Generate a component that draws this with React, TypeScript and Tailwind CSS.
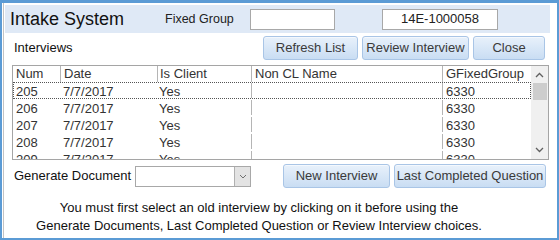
import React from "react";

const font = { fontFamily: '"Liberation Sans", Arial, sans-serif' };

function Btn({ w, children }: { w: string; children: React.ReactNode }) {
  return (
    <div
      className={`${w} h-[24px] flex items-center justify-center rounded-[3px] border border-[#a9c5e6] bg-gradient-to-b from-[#e8f1fb] to-[#c9ddf3] text-[13px] text-[#3a3a3a] shadow-[inset_0_1px_0_#f4f8fd]`}
    >
      {children}
    </div>
  );
}

const rows = ["205", "206", "207", "208", "209"];

export default function App() {
  return (
    <div style={font} className="w-[559px] h-[240px] bg-white">
      <div className="w-[559px] h-[240px] border-t-[3px] border-l-[2px] border-r-[2px] border-b-[2px] border-[#5b9bd5] flex flex-col">
        <div className="ml-[1px] border-l border-[#c3c3c3] flex-1 flex flex-col">
          {/* header */}
          <div className="mt-[2px] ml-[1px] mr-[7px] h-[28px] bg-[#dfe9f6] flex items-center">
            <div className="pl-[5px] w-[160px] text-[18px] text-[#111] leading-none">Intake System</div>
            <div className="w-[85px] text-[12.5px] text-[#222]">Fixed Group</div>
            <div className="w-[85px] h-[21px] bg-white border border-[#a8a8a8]" />
            <div className="ml-[47px] w-[116px] h-[21px] bg-white border border-[#a8a8a8] flex items-center justify-center text-[13px] text-[#222]">
              14E-1000058
            </div>
          </div>
          {/* interviews row */}
          <div className="mt-[3px] h-[24px] flex items-center">
            <div className="ml-[10px] w-[249px] text-[13px] text-[#111]">Interviews</div>
            <div className="flex gap-[4px]">
              <Btn w="w-[95px]">Refresh List</Btn>
              <Btn w="w-[107px]">Review Interview</Btn>
              <Btn w="w-[72px]">Close</Btn>
            </div>
          </div>
          {/* table */}
          <div className="mt-[5px] ml-[8px] w-[537px] h-[95px] border border-[#a5a5a5] flex overflow-hidden text-[13px] text-[#333]">
            <div className="flex-1 relative flex flex-col">
              <div className="h-[16px] flex leading-[16px] text-[#333]">
                <div className="w-[47px] pl-[3px]">Num</div>
                <div className="w-[97px] pl-[3px] border-l border-[#b5b5b5]">Date</div>
                <div className="w-[94px] pl-[2px] border-l border-[#b5b5b5]">Is Client</div>
                <div className="w-[191px] pl-[3px] border-l border-[#b5b5b5]">Non CL Name</div>
                <div className="w-[89px] pl-[3px] border-l border-[#b5b5b5]">GFixedGroup</div>
              </div>
              {rows.map((n, i) => (
                <div
                  key={n}
                  className={`h-[17px] flex leading-[17px] ${
                    i === 0 ? "border border-dotted border-[#555]" : "border border-transparent"
                  }`}
                >
                  <div className="w-[46px] pl-[2px]">{n}</div>
                  <div className="w-[97px] pl-[3px]">7/7/2017</div>
                  <div className="w-[94px] pl-[2px]">Yes</div>
                  <div className="w-[191px] border-l border-[#b5b5b5]" />
                  <div className="w-[88px] pl-[3px] border-l border-[#b5b5b5]">6330</div>
                </div>
              ))}
            </div>
            <div className="w-[17px] bg-[#f0f0f0] flex flex-col items-center">
              <svg width="9" height="6" viewBox="0 0 9 6" className="mt-[6px]">
                <path d="M1 5 L4.5 1.5 L8 5" fill="none" stroke="#606060" strokeWidth="1.3" />
              </svg>
              <div className="mt-[5px] w-[14px] h-[17px] bg-[#cdcdcd]" />
              <div className="flex-1" />
              <svg width="9" height="6" viewBox="0 0 9 6" className="mb-[6px]">
                <path d="M1 1 L4.5 4.5 L8 1" fill="none" stroke="#606060" strokeWidth="1.3" />
              </svg>
            </div>
          </div>
          {/* generate row */}
          <div className="mt-[4px] h-[24px] flex items-center">
            <div className="ml-[10px] w-[121px] text-[13px] text-[#111]">Generate Document</div>
            <div className="w-[116px] h-[21px] bg-white border border-[#a8a8a8] flex justify-end">
              <div className="w-[16px] h-full bg-[#e3e3e3] border-l border-[#b0b0b0] flex items-center justify-center">
                <svg width="8" height="5" viewBox="0 0 8 5">
                  <path d="M1 1 L4 4 L7 1" fill="none" stroke="#707070" strokeWidth="1" />
                </svg>
              </div>
            </div>
            <div className="ml-[32px] flex gap-[4px]">
              <Btn w="w-[107px]">New Interview</Btn>
              <Btn w="w-[152px]">Last Completed Question</Btn>
            </div>
          </div>
          {/* message */}
          <div className="mt-[11px] w-[510px] text-center text-[13px] leading-[18px] text-[#111]">
            <div>You must first select an old interview by clicking on it before using the</div>
            <div>Generate Documents, Last Completed Question or Review Interview choices.</div>
          </div>
        </div>
      </div>
    </div>
  );
}
